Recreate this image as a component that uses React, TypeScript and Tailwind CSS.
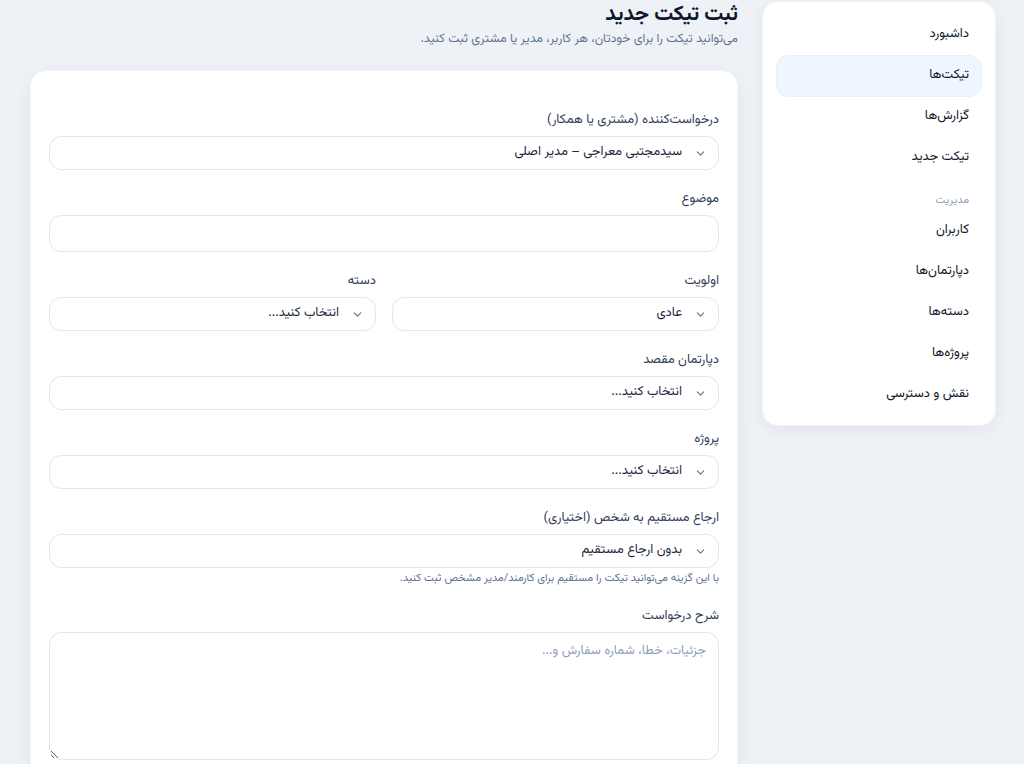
import React from 'react';
import { ChevronDown } from 'lucide-react';

const navMain = ['داشبورد', 'تیکت‌ها', 'گزارش‌ها', 'تیکت جدید'];
const navAdmin = ['کاربران', 'دپارتمان‌ها', 'دسته‌ها', 'پروژه‌ها', 'نقش و دسترسی'];

const NavItem = ({ label, active }: { label: string; active?: boolean }) => (
  <div
    className={
      'h-10 flex items-center px-3 rounded-xl text-[13px] text-slate-900 ' +
      (active ? 'bg-[#eff6ff] ring-1 ring-[#e6f0fb]' : '')
    }
  >
    {label}
  </div>
);

const Sidebar = () => (
  <aside className="w-[234px] shrink-0 self-start bg-white rounded-2xl shadow-[0_4px_18px_rgba(15,23,42,0.06)] border border-slate-100 px-[14px] pt-[13px] pb-[10px]">
    <nav className="flex flex-col gap-px">
      {navMain.map((n) => (
        <NavItem key={n} label={n} active={n === 'تیکت‌ها'} />
      ))}
    </nav>
    <div className="px-3 pt-[17px] pb-[4px] text-[11px] leading-3 text-slate-400">مدیریت</div>
    <nav className="flex flex-col gap-px">
      {navAdmin.map((n) => (
        <NavItem key={n} label={n} />
      ))}
    </nav>
  </aside>
);

const Label = ({ children }: { children: React.ReactNode }) => (
  <div className="text-[13px] leading-5 text-slate-700 mb-1.5">{children}</div>
);

const Select = ({ value }: { value: string }) => (
  <div className="h-[34px] flex items-center gap-3 rounded-xl border border-slate-200 bg-white pr-[11px] pl-3 text-[13px] text-slate-800">
    <ChevronDown size={13} strokeWidth={2} className="text-slate-500" />
    <span>{value}</span>
  </div>
);

const Field = ({ label, children }: { label: string; children: React.ReactNode }) => (
  <div>
    <Label>{label}</Label>
    {children}
  </div>
);

const App: React.FC = () => {
  return (
    <div
      dir="rtl"
      className="min-h-screen bg-[#eef2f7] pr-7 pl-[30px] pt-px flex gap-6"
      style={{ fontFamily: '"Vazirmatn", "Noto Sans Arabic", "DejaVu Sans", sans-serif' }}
    >
      <Sidebar />
      <main className="flex-1 min-w-0">
        <h1 className="text-[21px] leading-7 font-bold text-slate-900">ثبت تیکت جدید</h1>
        <p className="text-[12.5px] leading-5 text-slate-500">
          می‌توانید تیکت را برای خودتان، هر کاربر، مدیر یا مشتری ثبت کنید.
        </p>

        <section className="mt-[21px] bg-white rounded-2xl shadow-[0_4px_18px_rgba(15,23,42,0.06)] border border-slate-100 px-[18px] pt-[39px] pb-6 flex flex-col gap-[19px]">
          <Field label="درخواست‌کننده (مشتری یا همکار)">
            <Select value="سیدمجتبی معراجی – مدیر اصلی" />
          </Field>

          <Field label="موضوع">
            <input
              type="text"
              className="w-full h-[37px] rounded-xl border border-slate-200 bg-white px-3 text-[13px] outline-none"
            />
          </Field>

          <div className="grid grid-cols-2 gap-4">
            <Field label="اولویت">
              <Select value="عادی" />
            </Field>
            <Field label="دسته">
              <Select value="انتخاب کنید..." />
            </Field>
          </div>

          <Field label="دپارتمان مقصد">
            <Select value="انتخاب کنید..." />
          </Field>

          <Field label="پروژه">
            <Select value="انتخاب کنید..." />
          </Field>

          <div>
            <Label>ارجاع مستقیم به شخص (اختیاری)</Label>
            <Select value="بدون ارجاع مستقیم" />
            <p className="mt-[3px] text-[11px] leading-4 text-slate-500">
              با این گزینه می‌توانید تیکت را مستقیم برای کارمند/مدیر مشخص ثبت کنید.
            </p>
          </div>

          <Field label="شرح درخواست">
            <textarea
              placeholder="جزئیات، خطا، شماره سفارش و..."
              className="block w-full h-[128px] rounded-xl border border-slate-200 bg-white px-3 py-2 text-[13px] leading-5 placeholder:text-slate-400 outline-none"
            />
          </Field>
        </section>
      </main>
    </div>
  );
};

export default App;
